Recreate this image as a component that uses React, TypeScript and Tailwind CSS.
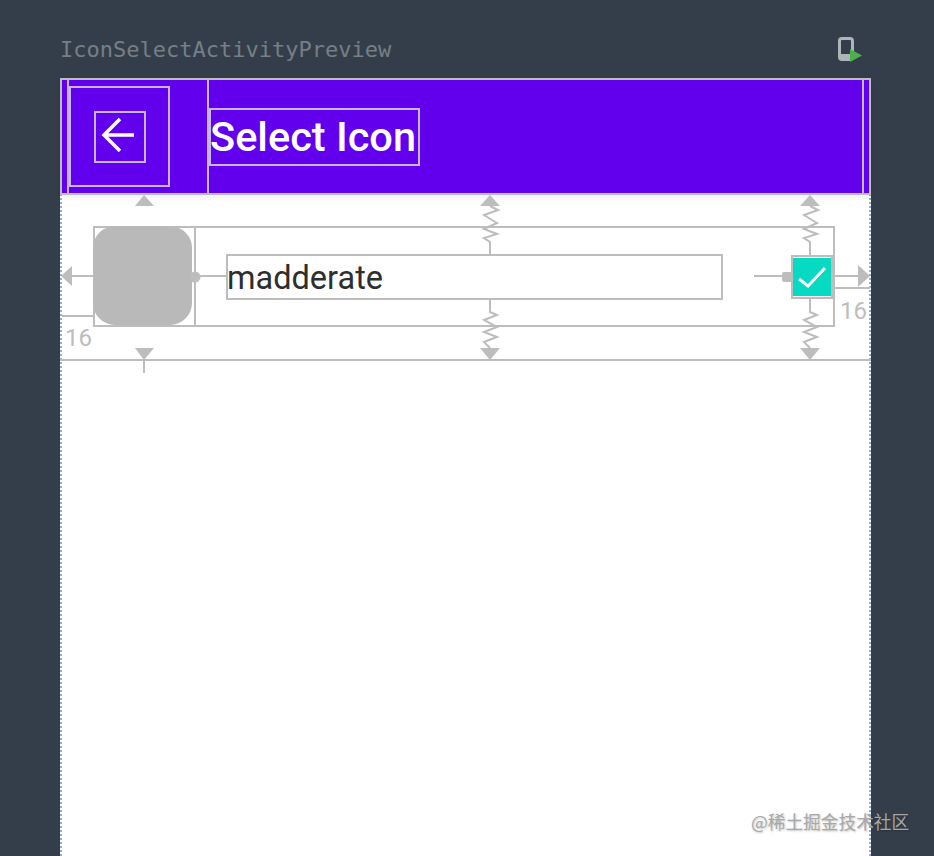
import React from 'react';

const GREY = '#bdbdbd';

// zig-zag constraint spring, dropped from the toolbar / raised from the bottom line
function Spring({ x, topEnd, bottomStart }: { x: number; topEnd: number; bottomStart: number }) {
  const top = [[0, 206], [8, 210], [-6, 215], [7, 223], [-6, 229], [7, 234], [-6, 238], [0, 242], [0, topEnd]];
  const bottom = [[0, bottomStart], [0, 312], [7, 315], [-6, 320], [7, 327], [-6, 332], [7, 337], [-6, 342], [0, 348]];
  const toPoints = (pts: number[][]) => pts.map(([dx, y]) => `${x + dx},${y}`).join(' ');
  return (
    <>
      <polygon points={`${x},195 ${x - 10},206 ${x + 10},206`} fill={GREY} />
      <polyline points={toPoints(top)} fill="none" stroke={GREY} strokeWidth="2" />
      <polyline points={toPoints(bottom)} fill="none" stroke={GREY} strokeWidth="2" />
      <polygon points={`${x},360 ${x - 10},348 ${x + 10},348`} fill={GREY} />
    </>
  );
}

function Constraints() {
  return (
    <svg className="absolute left-0 top-0 w-[811px] h-[180px]" viewBox="60 195 811 180" fill="none">
      {/* image constraints */}
      <polygon points="61,276 72,266 72,286" fill={GREY} />
      <line x1="72" y1="276" x2="94" y2="276" stroke={GREY} strokeWidth="2" />
      <line x1="62" y1="316" x2="94" y2="316" stroke={GREY} strokeWidth="2" />
      <polygon points="144,195 135,206 154,206" fill={GREY} />
      <polygon points="144,360 135,348 154,348" fill={GREY} />
      <line x1="144" y1="360" x2="144" y2="373" stroke={GREY} strokeWidth="2" />
      <circle cx="195" cy="277" r="5.5" fill={GREY} />
      <line x1="199" y1="276" x2="226" y2="276" stroke={GREY} strokeWidth="2" />

      <Spring x={490} topEnd={254} bottomStart={299} />
      <Spring x={810} topEnd={256} bottomStart={298} />

      {/* checkbox constraints */}
      <line x1="754" y1="276" x2="783" y2="276" stroke={GREY} strokeWidth="2" />
      <rect x="782" y="272" width="11" height="10" rx="2" fill={GREY} />
      <line x1="835" y1="276" x2="859" y2="276" stroke={GREY} strokeWidth="2" />
      <polygon points="858,265 870,276 858,287" fill={GREY} />
      <line x1="835" y1="288" x2="870" y2="288" stroke={GREY} strokeWidth="2" />
    </svg>
  );
}

export default function App() {
  return (
    <div className="relative w-[934px] h-[856px] overflow-hidden bg-[#343e4a] font-['Roboto',sans-serif]">
      {/* preview header */}
      <div className="flex items-center justify-between h-[78px] pl-[60px] pr-[72px] pt-[22px]">
        <span className="font-['DejaVu_Sans_Mono',monospace] text-[22px] leading-none text-[#767e87]">
          IconSelectActivityPreview
        </span>
        <svg width="24" height="26" viewBox="0 0 24 26" fill="none">
          <rect x="1.5" y="1.5" width="13" height="21" rx="2.5" stroke="#aeb4ba" strokeWidth="3" />
          <rect x="1.5" y="17" width="13" height="6" rx="1" fill="#aeb4ba" />
          <polygon points="12,12 24,18.5 12,25" fill="#4caf50" />
        </svg>
      </div>

      {/* design surface */}
      <div className="w-[811px] ml-[60px] h-[778px] bg-white border-x-2 border-dotted border-[#8fb0cf]">
        <div className="-mx-[2px] relative">
          {/* toolbar */}
          <div className="flex h-[117px] bg-[#6200ee] border-2 border-[#bdbdbd] shadow-[0_2px_6px_rgba(0,0,0,0.08)]">
            <div className="ml-[5px] w-[142px] flex items-center border-x-2 border-[#c9b6e8]">
              <div className="w-[101px] h-[101px] flex items-center justify-center border-2 border-[#c9b6e8]">
                <div className="w-[52px] h-[52px] border-2 border-[#c9b6e8]">
                  <svg width="48" height="48" viewBox="0 0 48 48" fill="none" stroke="#ffffff" strokeWidth="3.5">
                    <path d="M38 22H8M24 6L8 22L24 38" />
                  </svg>
                </div>
              </div>
            </div>
            <div className="self-center h-[58px] w-[211px] flex items-center border-2 border-[#c9b6e8]">
              <span className="-ml-[1px] pt-[1px] text-[41.5px] leading-none font-medium text-white whitespace-nowrap">Select Icon</span>
            </div>
            <div className="ml-auto mr-[5px] w-[2px] bg-[#c9b6e8]" />
          </div>

          {/* list item */}
          <div className="relative h-[166px] border-b-2 border-[#bdbdbd] pl-[33px] pt-[31px]">
            <div className="flex items-center w-[742px] h-[101px] border-2 border-[#bdbdbd]">
              <div className="w-[99px] h-[99px] -ml-[2px] -mt-[2px] rounded-[22px] bg-[#b9b9b9] shrink-0" />
              <div className="w-[2px] self-stretch bg-[#bdbdbd] shrink-0 ml-[2px]" />
              <div className="ml-[30px] w-[497px] h-[46px] flex items-center border-2 border-[#bdbdbd]">
                <span className="-ml-[1px] pt-[3px] text-[32.5px] leading-none text-[#2e2e2e]">madderate</span>
              </div>
              <div className="ml-auto w-[42px] h-[44px] flex items-center justify-center border-2 border-[#bdbdbd] bg-white">
                <svg width="38" height="38" viewBox="0 0 38 38">
                  <rect width="38" height="38" fill="#06dac2" />
                  <path d="M6 21 L15 28 L32 10" fill="none" stroke="#ffffff" strokeWidth="3" />
                </svg>
              </div>
            </div>
          </div>

          <div className="absolute left-0 top-[117px]">
            <Constraints />
            <span className="absolute left-[5px] top-[131px] text-[24px] leading-none text-[#bdbdbd]">16</span>
            <span className="absolute left-[780px] top-[104px] text-[24px] leading-none text-[#bdbdbd]">16</span>
          </div>
        </div>
      </div>

      {/* watermark */}
      <span className="absolute left-[751px] top-[809px] font-['Noto_Sans_CJK_SC',sans-serif] text-[17.7px] leading-[24px] whitespace-nowrap text-[#a8a8a8] [text-shadow:1px_1px_2px_rgba(0,0,0,0.25)]">
        @稀土掘金技术社区
      </span>
    </div>
  );
}
